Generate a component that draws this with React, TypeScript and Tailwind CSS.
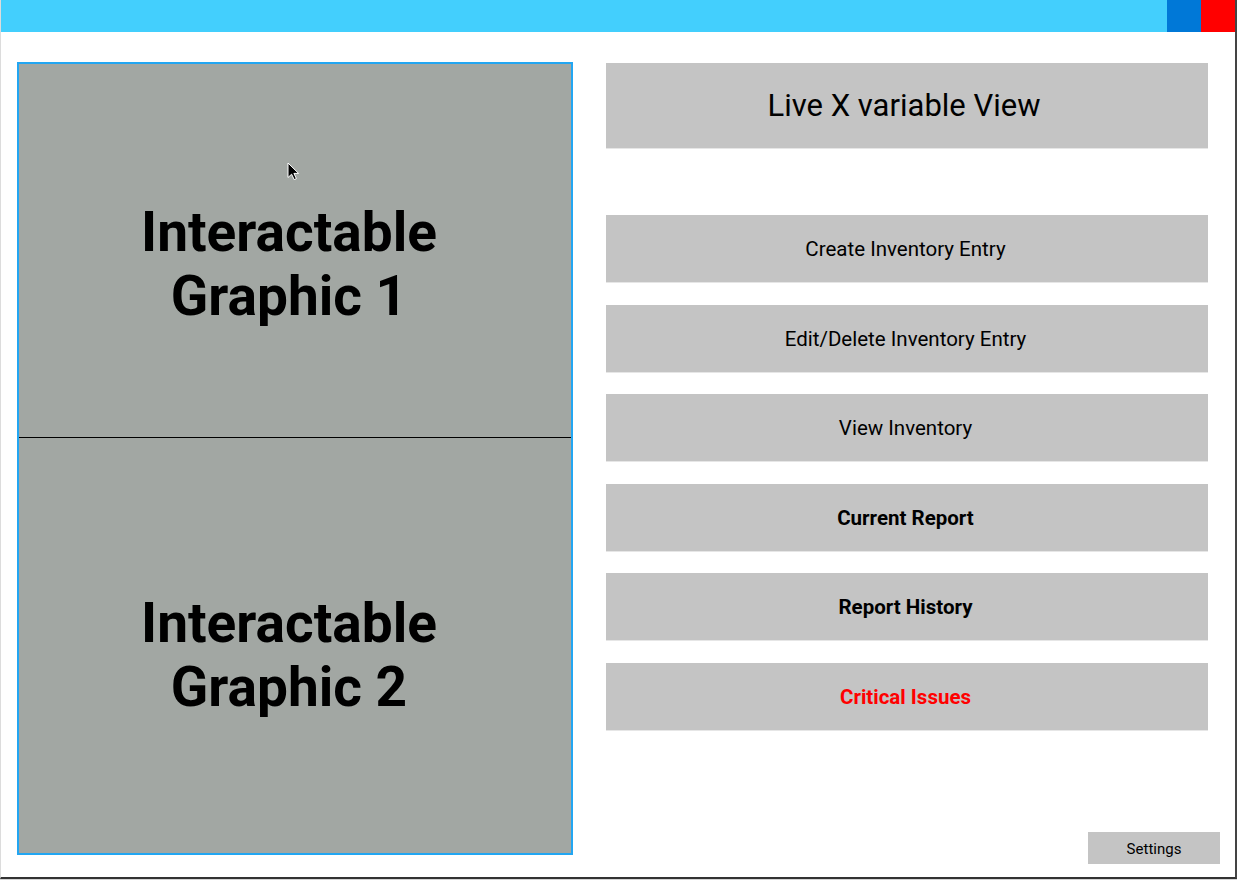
const actions = [
  { label: 'Create Inventory Entry', style: 'font-normal text-black' },
  { label: 'Edit/Delete Inventory Entry', style: 'font-normal text-black' },
  { label: 'View Inventory', style: 'font-normal text-black' },
  { label: 'Current Report', style: 'font-bold text-black' },
  { label: 'Report History', style: 'font-bold text-black' },
  { label: 'Critical Issues', style: 'font-bold text-[#ff0000]' },
];

const Cursor = () => (
  <svg className="absolute left-[268px] top-[98px]" width="16" height="20" viewBox="0 0 16 20">
    <path d="M1 1 L1 15.5 L4.6 12.2 L7.2 17.6 L9.4 16.6 L6.9 11.4 L11.6 11.4 Z" fill="#000" stroke="#fff" strokeWidth="1" strokeLinejoin="round" />
  </svg>
);

const Graphic = ({ n }: { n: number }) => (
  <h2 className="pr-3 text-center text-[55px] leading-[64px] font-bold text-black">
    Interactable
    <br />
    Graphic {n}
  </h2>
);

export default function App() {
  return (
    <div className="w-[1237px] h-[880px] bg-[#d4d4d4] font-['Roboto',sans-serif]">
      <div className="h-[879px] flex flex-col bg-white border-l border-l-[#dcdcdc] border-r-2 border-r-[#444] border-b-2 border-b-[#333]">
        {/* title bar */}
        <div className="h-8 flex justify-end bg-[#43cffd]">
          <div className="w-[34px] bg-[#0078d7]" />
          <div className="w-[34px] bg-[#ff0000]" />
        </div>

        <div className="flex-1 flex pt-[30px] pl-4 pr-[27px]">
          {/* graphics */}
          <div className="relative w-[556px] h-[793px] flex flex-col border-2 border-[#22a6f2] bg-[#a2a7a3]">
            <div className="h-[373px] pt-[136px]">
              <Graphic n={1} />
            </div>
            <div className="h-px bg-black" />
            <div className="flex-1 pt-[153px]">
              <Graphic n={2} />
            </div>
            <Cursor />
          </div>

          {/* controls */}
          <div className="flex-1 flex flex-col ml-[33px] pt-px">
            <div className="h-[86px] flex items-center justify-center pr-[6px] pt-[2px] bg-[#c4c4c4] border-b border-b-[#e6e6e6] text-[31px] text-black">
              Live X variable View
            </div>
            <div className="flex flex-col gap-[21.5px] mt-[66px]">
              {actions.map((a) => (
                <div
                  key={a.label}
                  className={`h-[68px] flex items-center justify-center pr-[3px] pt-[2px] bg-[#c4c4c4] border-b border-b-[#e6e6e6] text-[20.5px] ${a.style}`}
                >
                  {a.label}
                </div>
              ))}
            </div>
            <div className="flex-1" />
            <div className="flex justify-end -mr-3 mb-[13px]">
              <div className="w-[132px] h-8 flex items-center justify-center pt-[2px] bg-[#c4c4c4] text-[15px] text-black">
                Settings
              </div>
            </div>
          </div>
        </div>
      </div>
    </div>
  );
}
